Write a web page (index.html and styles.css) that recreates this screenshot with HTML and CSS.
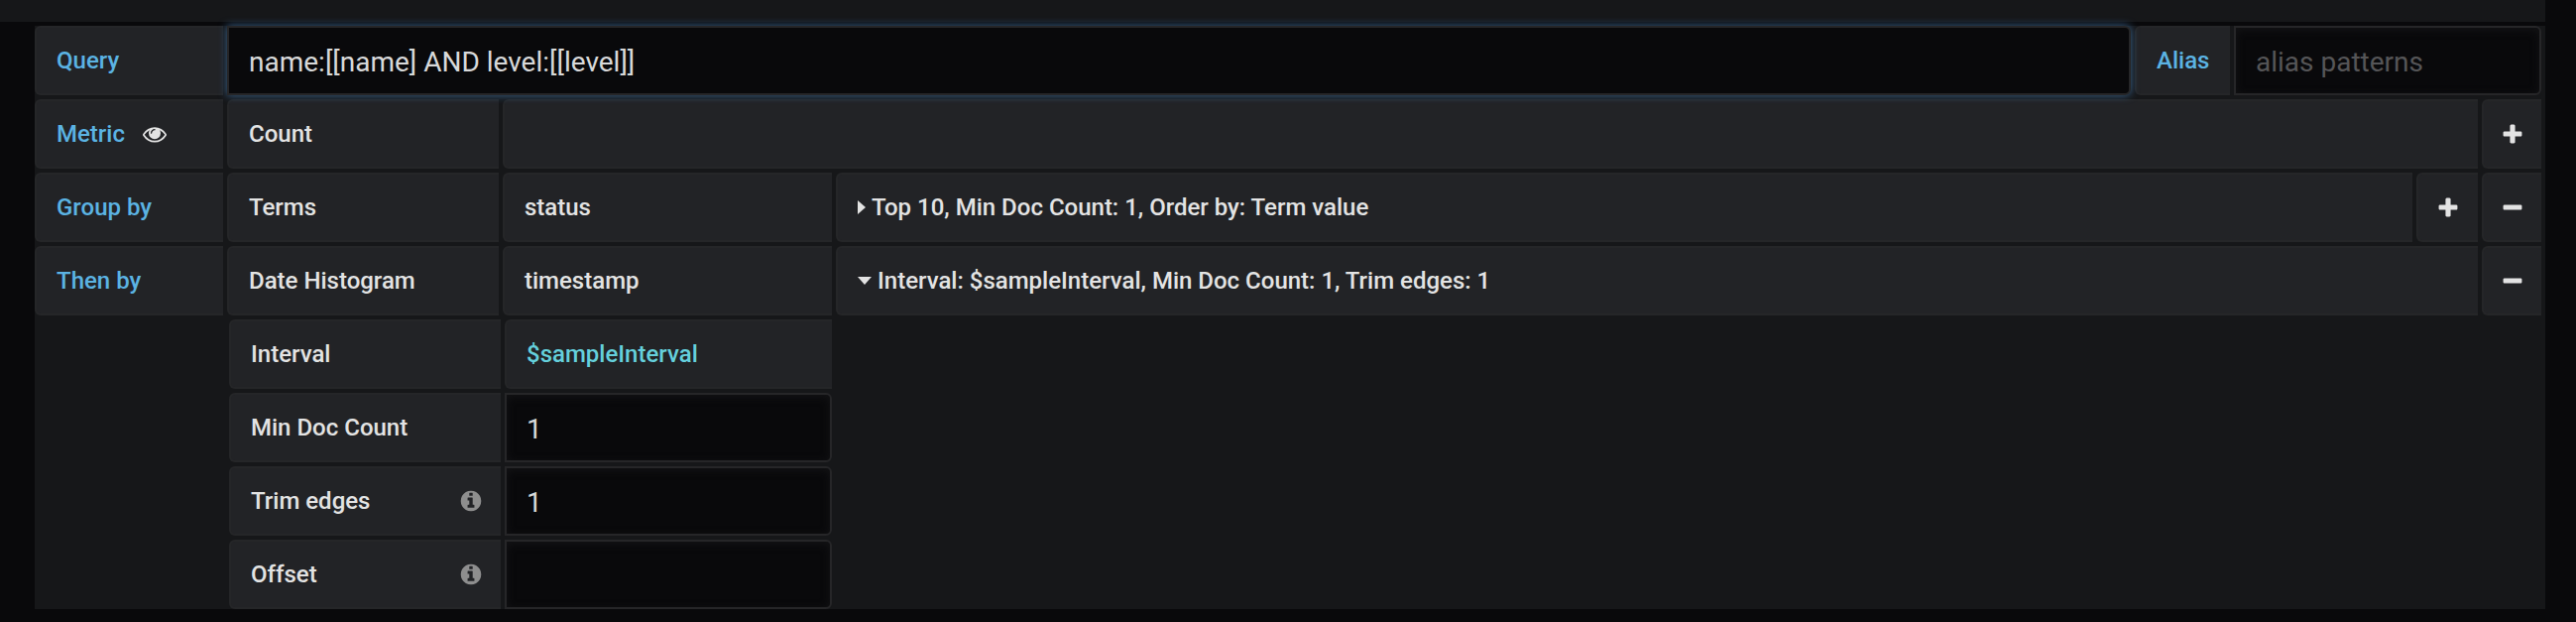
FILE: index.html
```html
<!DOCTYPE html>
<html lang="en">
<head>
    <meta charset="UTF-8">
    <meta name="viewport" content="width=device-width, initial-scale=1.0">
    <title>Query editor</title>
    <link rel="stylesheet" href="styles.css">
</head>
<body>
    <!-- Icon shapes -->
    <svg class="icon-defs" aria-hidden="true">
        <symbol id="icon-plus" viewBox="0 -64 1792 1792"><path d="M1600 736v192q0 40-28 68t-68 28h-416v416q0 40-28 68t-68 28h-192q-40 0-68-28t-28-68v-416h-416q-40 0-68-28t-28-68v-192q0-40 28-68t68-28h416v-416q0-40 28-68t68-28h192q40 0 68 28t28 68v416h416q40 0 68 28t28 68z"/></symbol>
        <symbol id="icon-minus" viewBox="0 -64 1792 1792"><path d="M1600 736v192q0 40-28 68t-68 28h-1216q-40 0-68-28t-28-68v-192q0-40 28-68t68-28h1216q40 0 68 28t28 68z"/></symbol>
        <symbol id="icon-eye" viewBox="0 0 1792 1792"><path d="M1664 960q-152-236-381-353 61 104 61 225 0 185-131.500 316.500t-316.500 131.500-316.500-131.500-131.500-316.500q0-121 61-225-229 117-381 353 133 205 333.500 326.500t434.500 121.500 434.500-121.500 333.500-326.500zm-720-384q0-20-14-34t-34-14q-125 0-214.500 89.500t-89.500 214.500q0 20 14 34t34 14 34-14 14-34q0-86 61-147t147-61q20 0 34-14t14-34zm848 384q0 34-20 69-140 230-376.500 368.500t-499.500 138.500-499.500-139-376.500-368q-20-35-20-69t20-69q140-229 376.500-368t499.500-139 499.500 139 376.500 368q20 35 20 69z"/></symbol>
        <symbol id="icon-info" viewBox="0 0 1792 1792"><path d="M1152 1376v-160q0-14-9-23t-23-9h-96v-512q0-14-9-23t-23-9h-320q-14 0-23 9t-9 23v160q0 14 9 23t23 9h96v320h-96q-14 0-23 9t-9 23v160q0 14 9 23t23 9h448q14 0 23-9t9-23zm-128-896v-160q0-14-9-23t-23-9h-192q-14 0-23 9t-9 23v160q0 14 9 23t23 9h192q14 0 23-9t9-23zm640 416q0 209-103 385.500t-279.500 279.500-385.500 103-385.500-103-279.500-279.500-103-385.500 103-385.500 279.500-279.500 385.500-103 385.500 103 279.500 279.500 103 385.500z"/></symbol>
    </svg>

    <div class="panel-strip"></div>

    <form class="query-editor">
        <!-- Query -->
        <div class="row">
            <label class="cell keyword" for="query">Query</label>
            <input class="field grow focused" id="query" type="text" value="name:[[name] AND level:[[level]]" spellcheck="false">
            <label class="cell keyword-alias" for="alias">Alias</label>
            <input class="field alias" id="alias" type="text" placeholder="alias patterns">
        </div>

        <!-- Metric -->
        <div class="row">
            <div class="cell keyword">
                Metric
                <button class="toggle" type="button" aria-label="Toggle metric"><svg class="icon"><use href="#icon-eye"/></svg></button>
            </div>
            <button class="cell type" type="button">Count</button>
            <div class="cell grow"></div>
            <button class="cell action" type="button" aria-label="Add metric"><svg class="icon"><use href="#icon-plus"/></svg></button>
        </div>

        <!-- Group by -->
        <div class="row">
            <div class="cell keyword">Group by</div>
            <button class="cell type" type="button">Terms</button>
            <button class="cell column" type="button">status</button>
            <button class="cell grow" type="button"><svg class="caret-right" viewBox="0 0 8 14"><path d="M0 0L8 7L0 14z"/></svg>Top 10, Min Doc Count: 1, Order by: Term value</button>
            <button class="cell action add" type="button" aria-label="Add group by"><svg class="icon"><use href="#icon-plus"/></svg></button>
            <button class="cell action" type="button" aria-label="Remove group by"><svg class="icon"><use href="#icon-minus"/></svg></button>
        </div>

        <!-- Then by -->
        <div class="row">
            <div class="cell keyword">Then by</div>
            <button class="cell type" type="button">Date Histogram</button>
            <button class="cell column" type="button">timestamp</button>
            <button class="cell grow" type="button"><svg class="caret-down" viewBox="0 0 14 8"><path d="M0 0H14L7 8z"/></svg>Interval: $sampleInterval, Min Doc Count: 1, Trim edges: 1</button>
            <button class="cell action" type="button" aria-label="Remove then by"><svg class="icon"><use href="#icon-minus"/></svg></button>
        </div>

        <!-- Histogram settings -->
        <div class="settings">
            <div class="row">
                <div class="cell type">Interval</div>
                <button class="cell setting variable" type="button">$sampleInterval</button>
            </div>
            <div class="row">
                <label class="cell type" for="min-doc-count">Min Doc Count</label>
                <input class="field setting" id="min-doc-count" type="text" value="1">
            </div>
            <div class="row">
                <label class="cell type" for="trim-edges">Trim edges <svg class="icon info"><use href="#icon-info"/></svg></label>
                <input class="field setting" id="trim-edges" type="text" value="1">
            </div>
            <div class="row">
                <label class="cell type" for="offset">Offset <svg class="icon info"><use href="#icon-info"/></svg></label>
                <input class="field setting" id="offset" type="text">
            </div>
        </div>
    </form>
</body>
</html>
```
FILE: styles.css
```css
* {
    box-sizing: border-box;
}
body {
    margin: 0;
    padding-right: 31px;
    background-color: #09090b;
    color: #e3e3e3;
    font-family: Roboto, sans-serif;
    font-size: 24px;
    font-weight: 500;
}
button {
    font: inherit;
    color: inherit;
    cursor: pointer;
}
/* Icons */
.icon-defs {
    display: none;
}
.icon {
    width: 24px;
    height: 24px;
    flex: none;
    fill: currentColor;
}
.icon.info {
    margin-left: auto;
    color: #8e8e8e;
}
.caret-right,
.caret-down {
    flex: none;
    fill: currentColor;
    margin-right: 6px;
}
.caret-right {
    width: 8px;
    height: 14px;
}
.caret-down {
    width: 14px;
    height: 8px;
}
/* Editor */
.panel-strip {
    height: 22px;
    margin-bottom: 4px;
    background-color: #161719;
}
.query-editor {
    display: flex;
    flex-direction: column;
    gap: 4px;
    margin-left: 35px;
    padding-right: 4px;
    background-color: #161719;
}
.row {
    display: flex;
    gap: 4px;
}
.settings {
    display: flex;
    flex-direction: column;
    gap: 4px;
    margin-left: 196px;
}
/* Cells */
.cell {
    display: flex;
    align-items: center;
    flex: none;
    height: 70px;
    padding: 0 18px 0 20px;
    border: 2px solid #252628;
    border-right: none;
    border-radius: 6px 0 0 6px;
    background-color: #222326;
    text-align: left;
}
.keyword,
.keyword-alias {
    color: #5bb3e3;
}
.keyword {
    width: 190px;
}
.keyword-alias {
    width: 96px;
}
.type {
    width: 274px;
}
.column {
    width: 332px;
}
.setting {
    width: 330px;
}
.grow {
    flex: 1;
    min-width: 0;
}
.variable {
    color: #65d0dc;
}
.action {
    justify-content: center;
    width: 60px;
    padding: 0;
}
.action.add {
    width: 62px;
}
.toggle {
    display: flex;
    margin-left: 18px;
    padding: 0;
    border: none;
    background: none;
    color: #e3e3e3;
}
/* Inputs */
.field {
    height: 70px;
    padding: 2px 20px 0;
    border: 2px solid #262628;
    border-radius: 0 6px 6px 0;
    outline: none;
    background-color: #09090b;
    box-shadow: inset 0 2px 8px #141416;
    color: #d8d9da;
    font-family: inherit;
    font-size: 28px;
    font-weight: 400;
}
.field::placeholder {
    color: #555557;
}
.field.alias {
    width: 310px;
}
.field.focused {
    position: relative;
    box-shadow: 0 0 8px #3a6590;
}
```
